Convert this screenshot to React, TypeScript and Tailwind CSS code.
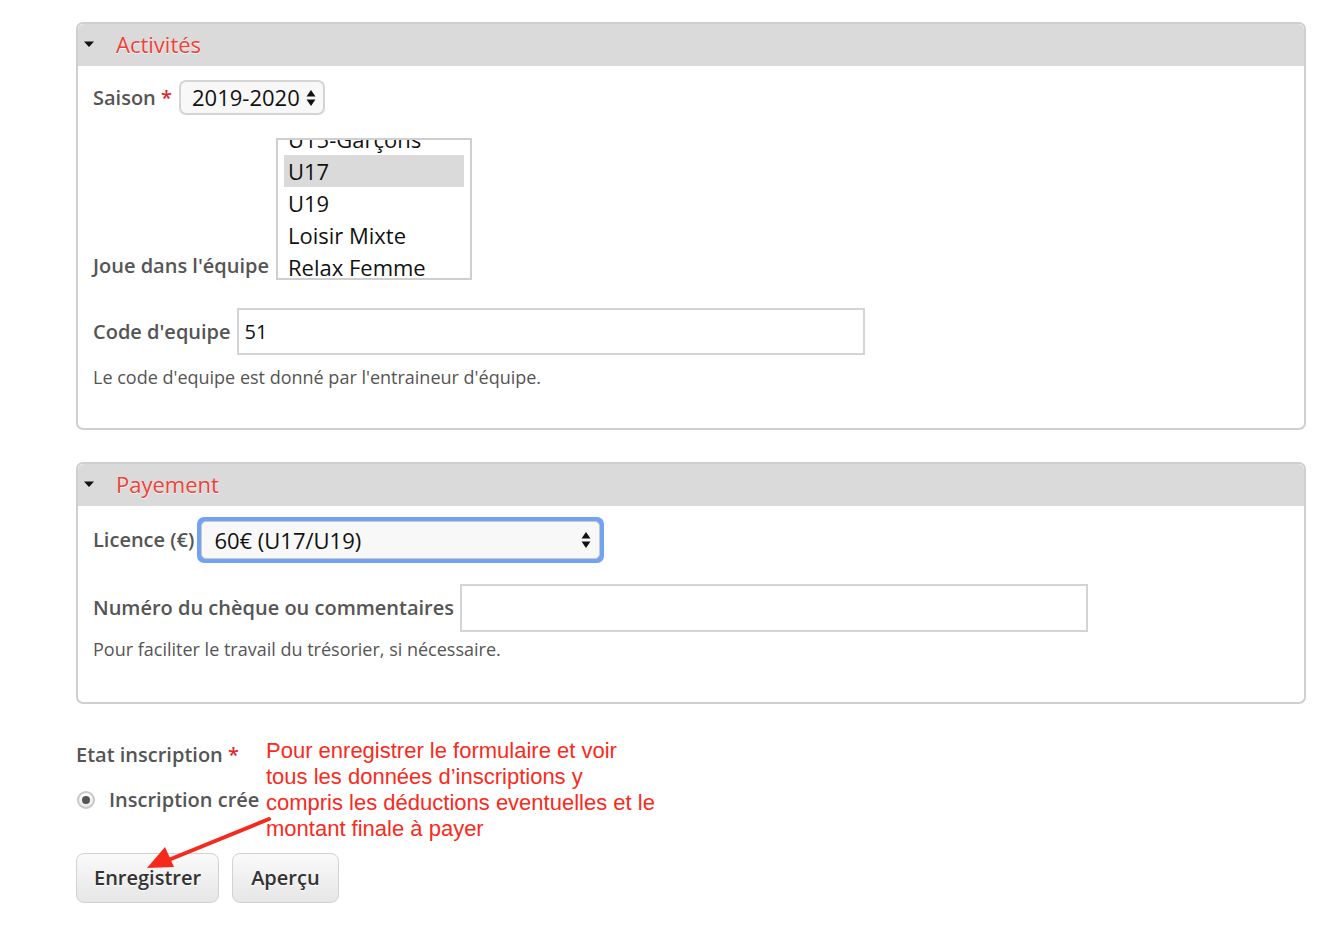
import React from "react";

const font = { fontFamily: '"Open Sans", "DejaVu Sans", sans-serif' };

function Caret() {
  return (
    <svg width="12" height="8" viewBox="0 0 12 8" className="shrink-0">
      <path d="M1 1.5h10L6 7z" fill="#111" />
    </svg>
  );
}

function UpDown() {
  return (
    <svg width="10" height="18" viewBox="0 0 10 18" className="shrink-0">
      <path d="M5 1l4.5 6.5h-9z" fill="#111" />
      <path d="M5 17l4.5-6.5h-9z" fill="#111" />
    </svg>
  );
}

function Legend({ title }: { title: string }) {
  return (
    <div className="flex items-center h-[42px] pb-[2px] bg-[#dadada] rounded-t-[6px] pl-[5px]">
      <Caret />
      <span className="ml-[21px] text-[22px] text-[#ee4036] leading-none [text-shadow:0_1px_0_#fff]">
        {title}
      </span>
    </div>
  );
}

function Fieldset({ title, children }: { title: string; children: React.ReactNode }) {
  return (
    <div className="border-2 border-[#cfcfcf] rounded-[7px] bg-white">
      <Legend title={title} />
      <div className="px-[15px]">{children}</div>
    </div>
  );
}

export default function App() {
  const teams = ["U15-Garçons", "U17", "U19", "Loisir Mixte", "Relax Femme"];

  return (
    <div style={font} className="bg-white min-h-[930px] w-[1344px] pl-[76px] pr-[38px] pt-[22px] text-[#555]">
      <Fieldset title="Activités">
        <div className="flex items-center pt-[14px] gap-[7px]">
          <span className="text-[20px] font-semibold">
            Saison <span className="text-[#e0282b]">*</span>
          </span>
          <div className="flex items-center gap-[6px] h-[35px] pl-[11px] pr-[7px] border-2 border-[#d4d4d4] rounded-[7px] bg-[#f8f8f8] text-[22px] text-[#111]">
            2019-2020
            <UpDown />
          </div>
        </div>

        <div className="flex items-end mt-[23px] gap-[7px]">
          <span className="text-[20px] font-semibold leading-[28px]">Joue dans l'équipe</span>
          <div className="w-[196px] h-[142px] border-2 border-[#cfcfcf] overflow-hidden px-[6px] bg-white">
            <div className="-mt-[17px]">
              {teams.map((t) => (
                <div
                  key={t}
                  className={`h-[32px] flex items-center px-[4px] text-[22px] text-[#111] ${
                    t === "U17" ? "bg-[#dadada]" : ""
                  }`}
                >
                  {t}
                </div>
              ))}
            </div>
          </div>
        </div>

        <div className="flex items-center mt-[28px] gap-[6px]">
          <span className="text-[20px] font-semibold">Code d'equipe</span>
          <div className="w-[628px] h-[47px] border-2 border-[#d4d4d4] flex items-center px-[6px] text-[20px] text-[#111]">
            51
          </div>
        </div>
        <p className="mt-[9px] text-[18px] text-[#555] pb-[37px]">Le code d'equipe est donné par l'entraineur d'équipe.</p>
      </Fieldset>

      <div className="h-[32px]" />

      <Fieldset title="Payement">
        <div className="flex items-center pt-[11px] gap-[3px]">
          <span className="text-[20px] font-semibold">Licence (€)</span>
          <div className="w-[407px] h-[46px] rounded-[7px] bg-[#72a3f2] p-[4px]">
            <div className="h-full rounded-[5px] bg-[#f8f8f8] border border-[#c9c9c9] flex items-center justify-between pl-[12px] pr-[8px] text-[22px] text-[#111]">
              60€ (U17/U19)
              <UpDown />
            </div>
          </div>
        </div>

        <div className="flex items-center mt-[21px] gap-[6px]">
          <span className="text-[20px] font-semibold">Numéro du chèque ou commentaires</span>
          <div className="w-[628px] h-[48px] border-2 border-[#d4d4d4]" />
        </div>
        <p className="mt-[4px] text-[18px] text-[#555] pb-[39px]">Pour faciliter le travail du trésorier, si nécessaire.</p>
      </Fieldset>

      <div className="relative">
        <div className="pt-[36px]">
          <span className="text-[20px] font-semibold">
            Etat inscription <span className="text-[#e0282b]">*</span>
          </span>
        </div>
        <div className="flex items-center mt-[15px] gap-[14px]">
          <span className="w-[18px] h-[18px] rounded-full border-2 border-[#c8c8c8] bg-gradient-to-b from-white to-[#e8e8e8] flex items-center justify-center ml-[1px]">
            <span className="w-[8px] h-[8px] rounded-full bg-[#555]" />
          </span>
          <span className="text-[20px] font-semibold">Inscription crée</span>
        </div>

        <div className="flex gap-[13px] mt-[38px]">
          <button className="h-[50px] px-[17px] rounded-[8px] border border-[#d2d2d2] bg-gradient-to-b from-[#fafafa] to-[#e6e6e6] text-[20px] font-semibold text-[#333] [text-shadow:0_1px_0_#fff]">
            Enregistrer
          </button>
          <button className="h-[50px] px-[18px] rounded-[8px] border border-[#d2d2d2] bg-gradient-to-b from-[#fafafa] to-[#e6e6e6] text-[20px] font-semibold text-[#333] [text-shadow:0_1px_0_#fff]">
            Aperçu
          </button>
        </div>

        {/* annotation over the form */}
        <div
          className="absolute left-[190px] top-[34px] text-[22px] leading-[26px] text-[#fa2a1c]"
          style={{ fontFamily: '"Liberation Sans", Arial, sans-serif' }}
        >
          Pour enregistrer le formulaire et voir
          <br />
          tous les données d’inscriptions y
          <br />
          compris les déductions eventuelles et le
          <br />
          montant finale à payer
        </div>
        <svg className="absolute left-[60px] top-[107px]" width="140" height="70" viewBox="0 0 140 70">
          <line x1="133" y1="8" x2="30" y2="50" stroke="#f5291c" strokeWidth="4" strokeLinecap="round" />
          <path d="M11 57 L29 36 L38 56 Z" fill="#f5291c" />
        </svg>
      </div>
    </div>
  );
}
